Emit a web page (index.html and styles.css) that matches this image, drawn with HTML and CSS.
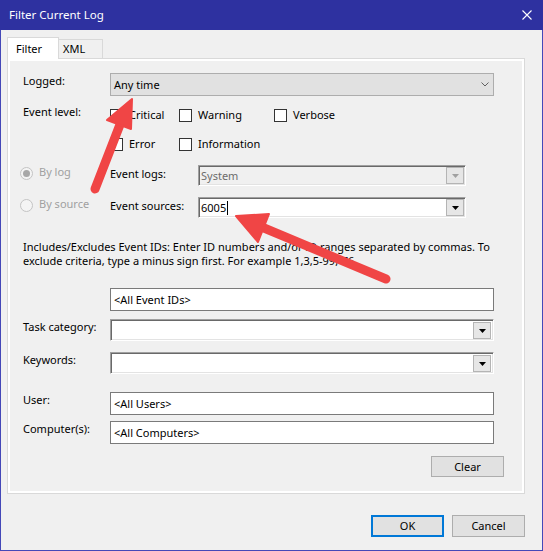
FILE: index.html
```html
<!DOCTYPE html>
<html lang="en">
<head>
<meta charset="utf-8">
<title>Filter Current Log</title>
<link rel="stylesheet" href="styles.css">
</head>
<body>
<div class="window">
  <div class="titlebar">
    <span class="title">Filter Current Log</span>
    <svg class="close" viewBox="0 0 10 10" width="10" height="10"><path d="M0.5 0.5 L9.5 9.5 M9.5 0.5 L0.5 9.5" stroke="#fff" stroke-width="1.1" fill="none"/></svg>
  </div>
  <div class="client">
    <div class="tabs">
      <div class="tab active">Filter</div>
      <div class="tab">XML</div>
    </div>
    <div class="panel">
      <div class="row row-logged">
        <div class="label">Logged:</div>
        <div class="select">
          <span>Any time</span>
          <svg class="chev" viewBox="0 0 8 5" width="8" height="5"><path d="M0.5 0.5 L4 4 L7.5 0.5" stroke="#606060" stroke-width="1" fill="none"/></svg>
        </div>
      </div>
      <div class="row row-level">
        <div class="label">Event level:</div>
        <div class="checks">
          <div class="check"><span class="box"></span>Critical</div>
          <div class="check"><span class="box"></span>Warning</div>
          <div class="check"><span class="box"></span>Verbose</div>
          <div class="check"><span class="box"></span>Error</div>
          <div class="check"><span class="box"></span>Information</div>
        </div>
      </div>
      <div class="row row-bylog">
        <div class="radio"><span class="circle checked"></span>By log</div>
        <div class="label2">Event logs:</div>
        <div class="combo disabled">
          <span>System</span>
          <span class="dd"><svg viewBox="0 0 7 4" width="7" height="4"><polygon points="0,0 7,0 3.5,4" fill="#a0a0a0"/></svg></span>
        </div>
      </div>
      <div class="row row-bysource">
        <div class="radio"><span class="circle"></span>By source</div>
        <div class="label2">Event sources:</div>
        <div class="combo">
          <span class="caret">6005</span>
          <span class="dd"><svg viewBox="0 0 7 4" width="7" height="4"><polygon points="0,0 7,0 3.5,4" fill="#000"/></svg></span>
        </div>
      </div>
      <p class="desc">Includes/Excludes Event IDs: Enter ID numbers and/or ID ranges separated by commas. To<br>exclude criteria, type a minus sign first. For example 1,3,5-99,-76</p>
      <div class="row row-ids">
        <div class="label"></div>
        <div class="textbox">&lt;All Event IDs&gt;</div>
      </div>
      <div class="row row-task">
        <div class="label">Task category:</div>
        <div class="combo wide">
          <span></span>
          <span class="dd"><svg viewBox="0 0 7 4" width="7" height="4"><polygon points="0,0 7,0 3.5,4" fill="#000"/></svg></span>
        </div>
      </div>
      <div class="row row-keywords">
        <div class="label">Keywords:</div>
        <div class="combo wide">
          <span></span>
          <span class="dd"><svg viewBox="0 0 7 4" width="7" height="4"><polygon points="0,0 7,0 3.5,4" fill="#000"/></svg></span>
        </div>
      </div>
      <div class="row row-user">
        <div class="label">User:</div>
        <div class="textbox">&lt;All Users&gt;</div>
      </div>
      <div class="row row-computer">
        <div class="label">Computer(s):</div>
        <div class="textbox">&lt;All Computers&gt;</div>
      </div>
      <div class="clear-row">
        <div class="btn">Clear</div>
      </div>
    </div>
    <div class="footer">
      <div class="btn ok">OK</div>
      <div class="btn">Cancel</div>
    </div>
  </div>
  <svg class="arrows" viewBox="0 0 543 551" width="543" height="551">
    <g fill="#f04545" stroke="#f04545" stroke-linecap="round" stroke-linejoin="round">
      <line x1="95" y1="189" x2="121" y2="122" stroke-width="9"/>
      <polygon points="132,99 107,120 131,129" stroke-width="2"/>
      <line x1="386" y1="279" x2="264" y2="228" stroke-width="9"/>
      <polygon points="236,216 269,214 258,242" stroke-width="2"/>
    </g>
  </svg>
</div>
</body>
</html>
```

FILE: styles.css
```css
* {
  box-sizing: border-box;
}

html, body {
  margin: 0;
  padding: 0;
}

body {
  font-family: "Noto Sans", "Liberation Sans", sans-serif;
  font-size: 11px;
  line-height: 16px;
  color: #000;
  background: #f0f0f0;
}

.window {
  position: relative;
  width: 543px;
  height: 551px;
  display: flex;
  flex-direction: column;
}

.titlebar {
  height: 30px;
  flex: none;
  background: #2e31a0;
  color: #fff;
  display: flex;
  align-items: center;
  justify-content: space-between;
  padding: 0 11px 0 9px;
}

.title {
  font-size: 11.5px;
}

.close {
  display: block;
}

.client {
  flex: 1;
  border: 1px solid #4448b8;
  border-top: none;
  background: #f0f0f0;
  padding: 7px 17px 0 6px;
  display: flex;
  flex-direction: column;
}

.tabs {
  display: flex;
  align-items: flex-end;
  height: 22px;
  margin-bottom: -1px;
  position: relative;
  z-index: 1;
}

.tab {
  width: 44px;
  height: 19px;
  margin-bottom: 1px;
  border: 1px solid #d9d9d9;
  border-left: none;
  border-bottom: none;
  background: #f0f0f0;
  padding-left: 4px;
  line-height: 18px;
}

.tab.active {
  width: 52px;
  height: 22px;
  margin-bottom: 0;
  border-left: 1px solid #d9d9d9;
  background: #fff;
  padding-left: 8px;
  line-height: 21px;
}

.panel {
  border: 1px solid #d9d9d9;
  box-shadow: inset 0 0 0 2px #fff;
  background: #f0f0f0;
  padding: 14px 20px 16px 15px;
  display: flex;
  flex-direction: column;
}

.row {
  display: flex;
  align-items: flex-start;
}

.label {
  width: 87px;
  flex: none;
}

.select {
  width: 384px;
  height: 23px;
  background: #e1e1e1;
  border: 1px solid #adadad;
  display: flex;
  align-items: center;
  justify-content: space-between;
  padding: 0 4px 0 3px;
}

.chev {
  display: block;
}

.row-level {
  margin-top: 8px;
}

.checks {
  display: grid;
  grid-template-columns: 69px 95px auto;
  row-gap: 13px;
  margin-top: 3px;
}

.check {
  display: flex;
  align-items: center;
  height: 16px;
}

.box {
  width: 13px;
  height: 13px;
  border: 1px solid #333;
  background: #fff;
  margin-right: 6px;
  flex: none;
}

.row-bylog {
  margin-top: 13px;
}

.row-bysource {
  margin-top: 11px;
}

.radio {
  width: 90px;
  margin-left: -3px;
  margin-top: -1px;
  flex: none;
  display: flex;
  align-items: center;
  color: #a0a0a0;
}

.circle {
  width: 13px;
  height: 13px;
  border-radius: 50%;
  border: 1px solid #c4c4c4;
  background: #f4f4f4;
  margin-right: 6px;
  margin-top: 2px;
  flex: none;
  display: flex;
  align-items: center;
  justify-content: center;
}

.circle.checked::after {
  content: "";
  width: 7px;
  height: 7px;
  border-radius: 50%;
  background: #a8a8a8;
}

.label2 {
  width: 88px;
  flex: none;
  margin-top: 1px;
}

.combo {
  width: 268px;
  height: 21px;
  background: #fff;
  border-top: 1px solid #a0a0a0;
  border-left: 1px solid #a0a0a0;
  border-right: 1px solid #fff;
  border-bottom: 1px solid #fff;
  box-shadow: inset 1px 1px 0 #696969, inset -1px -1px 0 #e3e3e3;
  display: flex;
  align-items: center;
  justify-content: space-between;
  padding: 1px 1px 1px 2px;
}

.combo.disabled {
  background: #f0f0f0;
  color: #6d6d6d;
}

.combo.wide {
  width: 384px;
  height: 22px;
  padding-right: 2px;
}

.dd {
  width: 18px;
  height: 17px;
  background: #e6e6e6;
  border: 1px solid #b4b4b4;
  display: flex;
  align-items: center;
  justify-content: center;
  flex: none;
}

.dd svg {
  display: block;
  margin-top: 1px;
}

.caret {
  border-right: 1px solid #000;
  padding-right: 1px;
  line-height: 14px;
}

.desc {
  margin: 22px 0 0;
  line-height: 14px;
  white-space: nowrap;
}

.row-ids {
  margin-top: 20px;
}

.textbox {
  width: 384px;
  height: 23px;
  border: 1px solid #7a7a7a;
  background: #fff;
  padding-left: 3px;
  display: flex;
  align-items: center;
}

.row-task {
  margin-top: 8px;
}

.row-keywords {
  margin-top: 11px;
}

.row-user {
  margin-top: 18px;
}

.row-computer {
  margin-top: 6px;
}

.clear-row {
  display: flex;
  justify-content: flex-end;
  margin-top: 12px;
}

.btn {
  width: 73px;
  height: 21px;
  background: #e1e1e1;
  border: 1px solid #adadad;
  display: flex;
  align-items: center;
  justify-content: center;
}

.footer {
  display: flex;
  justify-content: flex-end;
  gap: 8px;
  margin-top: 21px;
}

.footer .btn {
  height: 22px;
}

.btn.ok {
  border: 2px solid #0078d7;
}

.arrows {
  position: absolute;
  left: 0;
  top: 0;
  pointer-events: none;
}
```
